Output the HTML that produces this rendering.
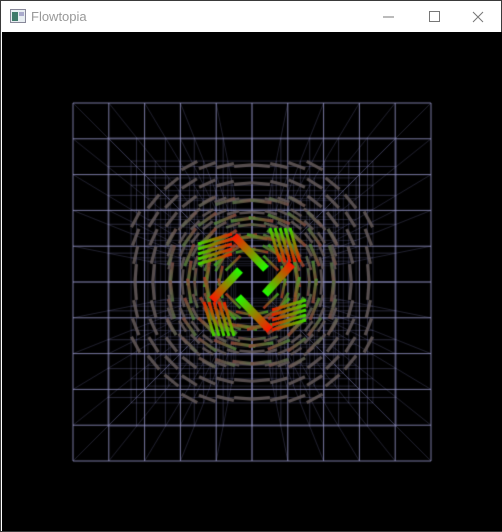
<!DOCTYPE html>
<html><head><meta charset="utf-8"><style>
html,body{margin:0;padding:0;background:#fff;width:502px;height:532px;overflow:hidden}
.win{position:absolute;left:0;top:0;width:500px;height:530px;border:1px solid #3a3a3a;background:#fff}
.title{position:absolute;left:0;top:0;width:500px;height:30px;background:#fff;font-family:"Liberation Sans",sans-serif;font-size:13px;color:#999}
.title .t{position:absolute;left:30px;top:8px}
canvas{position:absolute;left:1px;top:31px}
</style></head><body>
<div class="win">
<div class="title">
<svg style="position:absolute;left:9px;top:8px" width="16" height="14"><rect x="0.5" y="0.5" width="15" height="13" fill="#e8eef2" stroke="#889"/><rect x="2" y="3" width="6" height="9" fill="#3f7a6a"/><rect x="9" y="3" width="5" height="4" fill="#aac"/></svg>
<span class="t">Flowtopia</span>
<svg style="position:absolute;left:380px;top:8px" width="110" height="16"><line x1="2" y1="8" x2="13" y2="8" stroke="#777"/><rect x="48.5" y="2.5" width="10" height="10" fill="none" stroke="#777"/><path d="M92 3l10 10M102 3l-10 10" stroke="#777"/></svg>
</div>
<canvas id="c" width="500" height="499"></canvas>
</div>
<script>
const c=document.getElementById('c'),g=c.getContext('2d');
g.fillStyle='#000';g.fillRect(0,0,500,499);
const cx=250,cy=250,S=179,K=1.2;
function P(x,y,z){const s=S/(1+K*z);return [cx+x*s,cy+y*s];}
function L(a,b){g.beginPath();g.moveTo(a[0],a[1]);g.lineTo(b[0],b[1]);g.stroke();}
g.lineWidth=1;
const N=10;
g.strokeStyle='rgba(120,120,170,0.28)';
for(let i=0;i<=N;i++)for(let j=0;j<=N;j++){if(i>0&&i<N&&j>0&&j<N&&(i+j)%2)continue;const x=-1+2*i/N,y=-1+2*j/N;L(P(x,y,0),P(x,y,1));}
for(let k=5;k>=1;k--){const z=k/5;g.strokeStyle='rgba(130,130,185,'+(0.2+0.15*(1-z))+')';
for(let i=0;i<=N;i++){const t=-1+2*i/N;L(P(t,-1,z),P(t,1,z));L(P(-1,t,z),P(1,t,z));}}
g.strokeStyle='rgba(150,150,200,0.8)';
for(let i=0;i<=N;i++){const t=-1+2*i/N;L(P(t,-1,0),P(t,1,0));L(P(-1,t,0),P(1,t,0));}
function mix(a,b,t){return 'rgb('+a.map((v,i)=>Math.round(v+(b[i]-v)*t)).join(',')+')';}
const gray=[100,90,90],red=[230,30,0],grn=[40,230,0];
const arr=[];
for(let k=1;k>=0;k--){const z=k*0.35;
for(let i=0;i<16;i++)for(let j=0;j<16;j++){const x=-0.75+0.1*i,y=-0.75+0.1*j;const r=Math.hypot(x,y);
if(r>0.74||r<0.2)continue;
const t=Math.min(1,Math.max(0,(0.55-r)/0.4));
const len=0.1+0.08*t;
const vx=y/r,vy=-x/r;
const a=P(x-vx*len/2,y-vy*len/2,z),b=P(x+vx*len/2,y+vy*len/2,z);
arr.push([z,a,b,t,3.2/(1+0.5*z)]);}}
arr.sort((p,q)=>q[0]-p[0]);
for(const [z,a,b,t,w] of arr){
const gr=g.createLinearGradient(a[0],a[1],b[0],b[1]);
gr.addColorStop(0,mix(gray,red,t*0.75));gr.addColorStop(1,mix(gray,grn,t*0.75));
g.strokeStyle=gr;g.globalAlpha=0.85;g.lineWidth=w;L(a,b);}
g.globalAlpha=1;
// fan clusters, rotated by quadrant
function rot(p,q){let x=p[0]-cx,y=p[1]-cy;for(let i=0;i<q;i++){const t=x;x=y;y=-t;}return [cx+x,cy+y];}
const fan=[];for(let s=0;s<5;s++){fan.push([[230,202+s*5],[196,212+s*5]]);}
for(let q=0;q<4;q++)for(const [a0,b0] of fan){const a=rot(a0,q),b=rot(b0,q);
const gr=g.createLinearGradient(a[0],a[1],b[0],b[1]);gr.addColorStop(0,'rgb(230,30,0)');gr.addColorStop(1,'rgb(60,220,0)');g.strokeStyle=gr;g.lineWidth=3;L(a,b);}
const big=[[[232,204],[264,237]],[[290,232],[263,262]],[[268,298],[236,265]],[[210,268],[238,238]]];
for(const [a,b] of big){const gr=g.createLinearGradient(a[0],a[1],b[0],b[1]);gr.addColorStop(0,'rgb(255,20,0)');gr.addColorStop(1,'rgb(30,255,0)');g.strokeStyle=gr;g.lineWidth=8;L(a,b);}
</script>
</body></html>
